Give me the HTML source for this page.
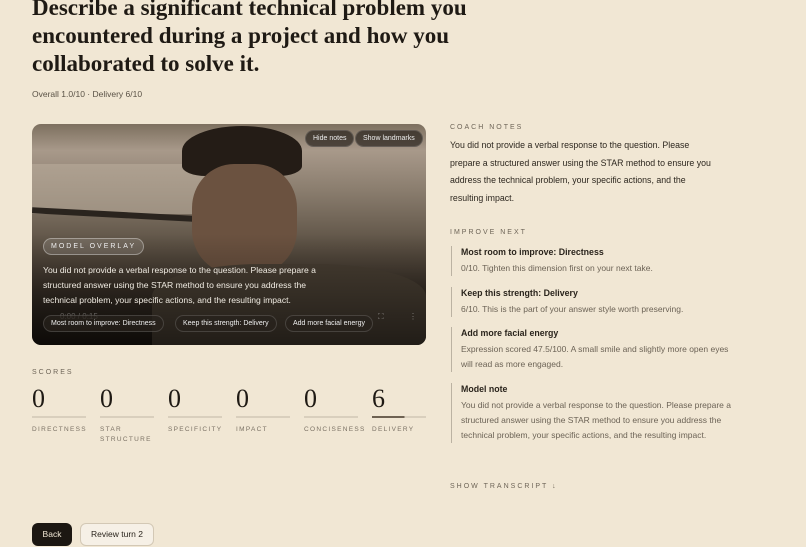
<!DOCTYPE html>
<html><head><style>
*{margin:0;padding:0;box-sizing:border-box}
body{width:806px;height:547px;overflow:hidden;background:#f1e7d4;font-family:"Liberation Sans",sans-serif;color:#2a241c;position:relative}
.abs{position:absolute}
h1{position:absolute;left:32px;top:-6px;font-family:"Liberation Serif",serif;font-weight:700;font-size:23px;line-height:28px;color:#1f1a14;width:470px}
.meta{left:32px;top:89px;font-size:8.5px;color:#5a5246}
.video{left:32px;top:124px;width:394px;height:221px;border-radius:9px;overflow:hidden;
background:linear-gradient(180deg,#7d705f 0%,#a8998a 12%,#8a7d6e 30%,#5c5144 55%,#3a3128 75%,#1e1812 100%)}
.lbl{font-size:7px;letter-spacing:2px;color:#6e6558}
.pill{position:absolute;border-radius:10px;font-size:7px;color:#eee;background:rgba(40,34,28,.7);border:1px solid rgba(255,255,255,.15);padding:0 7px;height:17px;line-height:16px;white-space:nowrap}
.rt{font-size:8.8px;line-height:17.5px;color:#2d271f}
.item{position:absolute;left:451px;border-left:1.5px solid #bbb2a2;padding-left:9px;width:280px}
.item b{display:block;font-size:8.8px;font-weight:700;color:#2a241c;line-height:13px}
.item span{display:block;font-size:8.5px;color:#6c6356;line-height:15px;margin-top:2px}
.sc{position:absolute;top:386px;width:54px}
.sc .n{font-family:"Liberation Serif",serif;font-size:26px;line-height:26px;color:#1f1a14}
.sc .l{height:2px;background:#d9cfbd;margin-top:4px}
.sc .t{font-size:6.5px;letter-spacing:1.3px;color:#7a7164;margin-top:7px;line-height:10px;white-space:nowrap}
</style></head><body>
<h1>Describe a significant technical problem you encountered during a project and how you collaborated to solve it.</h1>
<div class="abs meta">Overall 1.0/10 · Delivery 6/10</div>
<div class="abs video">
 <div class="abs" style="left:0;top:40px;width:180px;height:50px;background:#b9ab9b;opacity:.6"></div>
 <div class="abs" style="left:0;top:88px;width:180px;height:6px;background:#2a241e;transform:rotate(3deg)"></div>
 <div class="abs" style="left:150px;top:2px;width:120px;height:50px;border-radius:50% 50% 20% 20%;background:#241c16"></div>
 <div class="abs" style="left:160px;top:40px;width:105px;height:110px;border-radius:40%;background:#6b5240"></div>
 <div class="abs" style="left:120px;top:140px;width:274px;height:81px;border-radius:40% 40% 0 0;background:#4a4034"></div>
 <div class="abs" style="left:0;top:110px;width:394px;height:111px;background:linear-gradient(180deg,rgba(0,0,0,0),rgba(0,0,0,.55))"></div>
 <div class="pill" style="left:273px;top:6px">Hide notes</div>
 <div class="pill" style="left:323px;top:6px">Show landmarks</div>
 <div class="pill" style="left:11px;top:114px;font-size:7px;letter-spacing:2px;background:rgba(255,255,255,.12);border-color:rgba(255,255,255,.35)">MODEL OVERLAY</div>
 <div class="abs" style="left:11px;top:139px;width:285px;font-size:8.6px;line-height:15px;color:#f0ebe2">You did not provide a verbal response to the question. Please prepare a structured answer using the STAR method to ensure you address the technical problem, your specific actions, and the resulting impact.</div>
 <div class="abs" style="left:28px;top:188px;font-size:8px;color:rgba(255,255,255,.3)">0:00 / 0:15</div>
 <div class="pill" style="left:11px;top:191px">Most room to improve: Directness</div>
 <div class="pill" style="left:143px;top:191px">Keep this strength: Delivery</div>
 <div class="pill" style="left:253px;top:191px">Add more facial energy</div>
 <div class="abs" style="left:346px;top:188px;font-size:8px;color:rgba(255,255,255,.4)">⛶</div>
 <div class="abs" style="left:377px;top:188px;font-size:8px;color:rgba(255,255,255,.4)">⋮</div>
</div>
<div class="abs lbl" style="left:32px;top:369px">SCORES</div>
<div class="sc" style="left:32px"><div class="n">0</div><div class="l"></div><div class="t">DIRECTNESS</div></div>
<div class="sc" style="left:100px"><div class="n">0</div><div class="l"></div><div class="t">STAR<br>STRUCTURE</div></div>
<div class="sc" style="left:168px"><div class="n">0</div><div class="l"></div><div class="t">SPECIFICITY</div></div>
<div class="sc" style="left:236px"><div class="n">0</div><div class="l"></div><div class="t">IMPACT</div></div>
<div class="sc" style="left:304px"><div class="n">0</div><div class="l"></div><div class="t">CONCISENESS</div></div>
<div class="sc" style="left:372px"><div class="n">6</div><div class="l" style="background:linear-gradient(90deg,#6e6252 60%,#d9cfbd 60%)"></div><div class="t">DELIVERY</div></div>
<div class="abs lbl" style="left:450px;top:124px">COACH NOTES</div>
<div class="abs rt" style="left:450px;top:137px;width:270px">You did not provide a verbal response to the question. Please prepare a structured answer using the STAR method to ensure you address the technical problem, your specific actions, and the resulting impact.</div>
<div class="abs lbl" style="left:450px;top:229px">IMPROVE NEXT</div>
<div class="item" style="top:246px"><b>Most room to improve: Directness</b><span>0/10. Tighten this dimension first on your next take.</span></div>
<div class="item" style="top:287px"><b>Keep this strength: Delivery</b><span>6/10. This is the part of your answer style worth preserving.</span></div>
<div class="item" style="top:327px"><b>Add more facial energy</b><span>Expression scored 47.5/100. A small smile and slightly more open eyes will read as more engaged.</span></div>
<div class="item" style="top:383px"><b>Model note</b><span>You did not provide a verbal response to the question. Please prepare a structured answer using the STAR method to ensure you address the technical problem, your specific actions, and the resulting impact.</span></div>
<div class="abs lbl" style="left:450px;top:483px">SHOW TRANSCRIPT ↓</div>
<div class="abs" style="left:32px;top:523px;width:40px;height:23px;border-radius:6px;background:#1c1712;color:#f1e7d4;font-size:8.5px;text-align:center;line-height:23px">Back</div>
<div class="abs" style="left:80px;top:523px;width:74px;height:23px;border-radius:6px;background:#f6f0e6;border:1px solid #d3c8b5;color:#2a241c;font-size:8.5px;text-align:center;line-height:21px">Review turn 2</div>
</body></html>
